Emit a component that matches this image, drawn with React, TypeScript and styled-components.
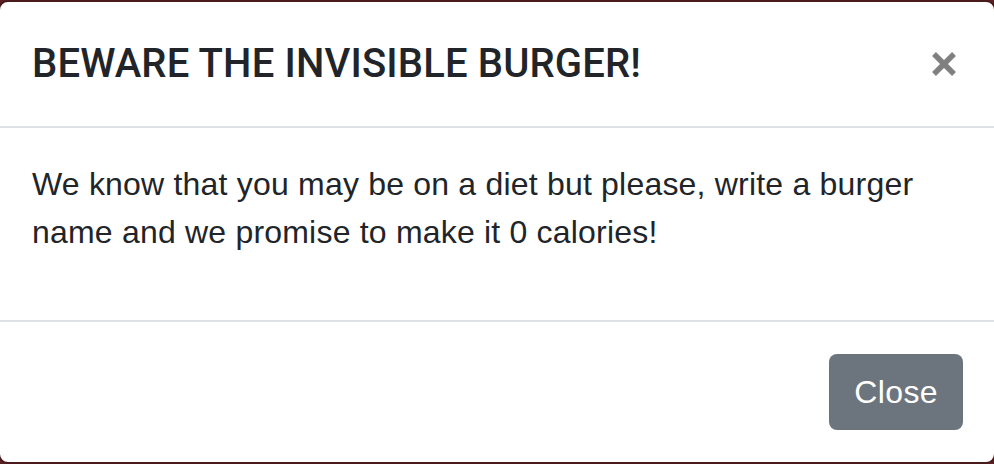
import React from "react";
import styled, { createGlobalStyle } from "styled-components";

const Global = createGlobalStyle`
  html, body {
    margin: 0;
    padding: 0;
    background: #5a2124;
    overflow: hidden;
  }
  body {
    font-family: "Liberation Sans", Arial, sans-serif;
    color: #212529;
    -webkit-font-smoothing: antialiased;
  }
  * { box-sizing: border-box; }
`;

const Backdrop = styled.div`
  width: 994px;
  height: 464px;
  background: #5a2124;
  display: flex;
  align-items: flex-start;
  justify-content: center;
  overflow: hidden;
`;

const Modal = styled.div`
  flex: 0 0 auto;
  width: 998px;
  margin: 0 -2px;
  background: #fff;
  border: 2px solid #4a1a1c;
  border-radius: 10px;
  display: flex;
  flex-direction: column;
`;

const Header = styled.div`
  display: flex;
  align-items: flex-start;
  justify-content: space-between;
  padding: 32px;
  border-bottom: 2px solid #dee2e6;
`;

const Title = styled.h5`
  margin: 0;
  font-family: Roboto, "Liberation Sans", sans-serif;
  font-size: 40px;
  font-weight: 500;
  line-height: 60px;
  letter-spacing: 0.15px;
`;

const CloseX = styled.button`
  border: 0;
  background: transparent;
  padding: 0;
  margin: 18px 6px 0 0;
  width: 24px;
  height: 24px;
  display: flex;
  align-items: center;
  justify-content: center;
  cursor: pointer;
`;

const Body = styled.div`
  padding: 32px;
`;

const Text = styled.p`
  margin: 0 0 32px;
  font-size: 32px;
  line-height: 48px;
  letter-spacing: 0.2px;
`;

const Footer = styled.div`
  display: flex;
  justify-content: flex-end;
  padding: 32px 31px 32px 32px;
  border-top: 2px solid #dee2e6;
`;

const Button = styled.button`
  font-family: inherit;
  font-size: 32px;
  line-height: 48px;
  padding: 14px 25px;
  letter-spacing: 0.4px;
  color: #fff;
  background: #6c757d;
  border: 0;
  border-radius: 8px;
  cursor: pointer;
`;

export default function App() {
  return (
    <>
      <Global />
      <Backdrop>
        <Modal>
          <Header>
            <Title>BEWARE THE INVISIBLE BURGER!</Title>
            <CloseX aria-label="Close">
              <svg width="24" height="24" viewBox="0 0 24 24">
                <path d="M2 2 L22 22 M22 2 L2 22" stroke="#808080" strokeWidth="5.5" strokeLinecap="butt" />
              </svg>
            </CloseX>
          </Header>
          <Body>
            <Text>
              We know that you may be on a diet but please, write a burger name and we promise to make it 0 calories!
            </Text>
          </Body>
          <Footer>
            <Button>Close</Button>
          </Footer>
        </Modal>
      </Backdrop>
    </>
  );
}
